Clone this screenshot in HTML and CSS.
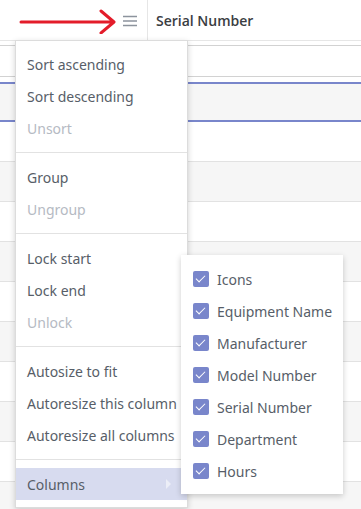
FILE: index.html
```html
<!DOCTYPE html>
<html lang="en">
<head>
    <meta charset="UTF-8">
    <title>Column menu</title>
    <link rel="stylesheet" href="styles.css">
</head>
<body>
<div class="tabla">
    <div class="cabecera">
        <div class="celda-menu">
            <svg class="flecha" width="100" height="26" viewBox="0 0 100 26">
                <path d="M4 14 H96 M84 3 L97 14 L84 25" fill="none" stroke="#e31c2a" stroke-width="3" stroke-linecap="round" stroke-linejoin="round"/>
            </svg>
            <svg class="hamburguesa" width="14" height="12" viewBox="0 0 14 12">
                <path d="M0 1.5 H14 M0 6 H14 M0 10.5 H14" stroke="#8c939d" stroke-width="1.5"/>
            </svg>
        </div>
        <div class="celda-titulo">Serial Number</div>
    </div>
    <div class="fila-hueco"></div>
    <div class="fila-filtro"></div>
    <div class="fila-espacio"></div>
    <div class="fila-activa"></div>
    <div class="fila"></div>
    <div class="fila gris"></div>
    <div class="fila"></div>
    <div class="fila gris"></div>
    <div class="fila"></div>
    <div class="fila gris"></div>
    <div class="fila"></div>
    <div class="fila gris"></div>
    <div class="fila"></div>
    <div class="fila gris"></div>
</div>

<div class="menu">
    <div class="opcion">Sort ascending</div>
    <div class="opcion">Sort descending</div>
    <div class="opcion apagada">Unsort</div>
    <div class="separador"></div>
    <div class="opcion">Group</div>
    <div class="opcion apagada">Ungroup</div>
    <div class="separador"></div>
    <div class="opcion">Lock start</div>
    <div class="opcion">Lock end</div>
    <div class="opcion apagada">Unlock</div>
    <div class="separador"></div>
    <div class="opcion">Autosize to fit</div>
    <div class="opcion">Autoresize this column</div>
    <div class="opcion">Autoresize all columns</div>
    <div class="separador"></div>
    <div class="opcion marcada">Columns <span class="triangulo"></span></div>
</div>

<div class="submenu">
    <div class="casilla"><span class="check"></span>Icons</div>
    <div class="casilla"><span class="check"></span>Equipment Name</div>
    <div class="casilla"><span class="check"></span>Manufacturer</div>
    <div class="casilla"><span class="check"></span>Model Number</div>
    <div class="casilla"><span class="check"></span>Serial Number</div>
    <div class="casilla"><span class="check"></span>Department</div>
    <div class="casilla"><span class="check"></span>Hours</div>
</div>
</body>
</html>
```

FILE: styles.css
```css
body {
    margin: 0;
    font-family: "Noto Sans", "Open Sans", sans-serif;
    font-size: 14px;
    background: #fff;
    overflow: hidden;
}
.tabla {
    width: 361px;
}
.cabecera {
    display: flex;
    height: 41px;
    box-sizing: border-box;
    border-bottom: 1px solid #e6e6e6;
}
.celda-menu {
    width: 148px;
    box-sizing: border-box;
    border-right: 1px solid #e6e6e6;
    display: flex;
    align-items: center;
    justify-content: flex-end;
    padding-right: 10px;
}
.flecha {
    margin-right: 6px;
    margin-top: 1px;
}
.hamburguesa {
    margin-top: 1px;
}
.celda-titulo {
    display: flex;
    align-items: center;
    padding-left: 8px;
    font-family: "Open Sans", sans-serif;
    font-weight: 600;
    color: #3a3d42;
}
.fila-hueco {
    height: 5px;
    box-sizing: border-box;
    border-bottom: 1px solid #d2d2d2;
}
.fila-filtro {
    height: 31px;
    box-sizing: border-box;
    border-bottom: 1px solid #d2d2d2;
}
.fila-espacio {
    height: 5px;
}
.fila-activa {
    height: 40px;
    box-sizing: border-box;
    background: #f6f6f6;
    border-top: 2px solid #7986cb;
    border-bottom: 2px solid #7986cb;
}
.fila {
    height: 40px;
    box-sizing: border-box;
    border-bottom: 1px solid #e2e2e2;
}
.fila.gris {
    background: #f6f6f6;
}
.menu {
    position: absolute;
    left: 15px;
    top: 40px;
    width: 173px;
    box-sizing: border-box;
    background: #fff;
    border: 1px solid #dcdcdc;
    box-shadow: 0 2px 6px rgba(0,0,0,0.18);
    padding: 7px 0;
}
.opcion {
    height: 32px;
    line-height: 34px;
    padding-left: 11px;
    color: #575e68;
    white-space: nowrap;
    position: relative;
}
.opcion.apagada {
    color: #b5bac3;
}
.opcion.marcada {
    background: #d7dbef;
}
.triangulo {
    position: absolute;
    right: 16px;
    top: 11px;
    border-left: 5px solid #eceef7;
    border-top: 5px solid transparent;
    border-bottom: 5px solid transparent;
}
.separador {
    height: 1px;
    margin: 8px 0;
    background: #e2e2e2;
}
.submenu {
    position: absolute;
    left: 181px;
    top: 255px;
    width: 162px;
    box-sizing: border-box;
    background: #fff;
    box-shadow: 0 2px 6px rgba(0,0,0,0.2);
    padding: 8px 0 7px;
}
.casilla {
    height: 32px;
    display: flex;
    align-items: center;
    padding-left: 12px;
    color: #575e68;
    white-space: nowrap;
}
.check {
    width: 16px;
    height: 16px;
    border-radius: 2px;
    background: #7986cb;
    margin-right: 8px;
    position: relative;
}
.check::after {
    content: "";
    position: absolute;
    left: 5px;
    top: 2px;
    width: 4px;
    height: 8px;
    border-right: 1.5px solid #fff;
    border-bottom: 1.5px solid #fff;
    transform: rotate(45deg);
}
```
